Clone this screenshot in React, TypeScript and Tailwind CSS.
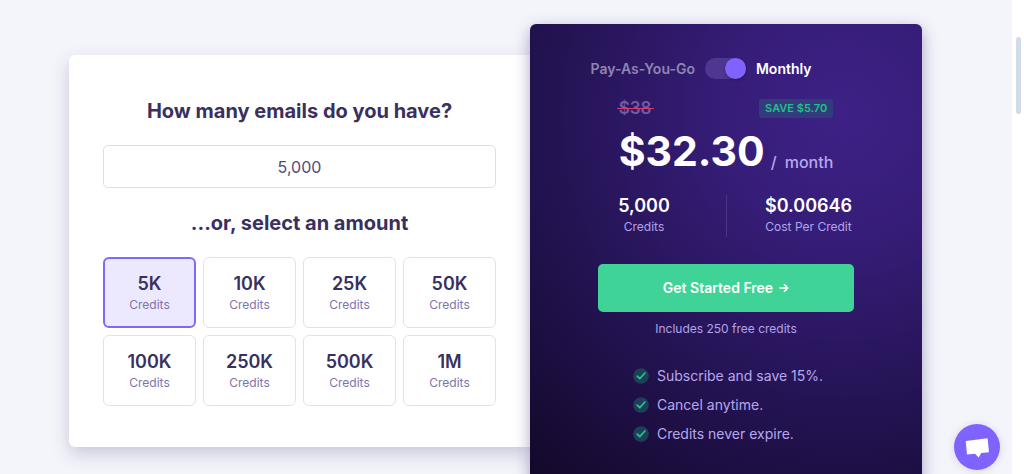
import { useState } from "react";
import clsx from "clsx";

const AMOUNTS = [
  { label: "5K", value: "5,000" },
  { label: "10K", value: "10,000" },
  { label: "25K", value: "25,000" },
  { label: "50K", value: "50,000" },
  { label: "100K", value: "100,000" },
  { label: "250K", value: "250,000" },
  { label: "500K", value: "500,000" },
  { label: "1M", value: "1,000,000" },
];

const PERKS = ["Subscribe and save 15%.", "Cancel anytime.", "Credits never expire."];

const CheckIcon = () => (
  <svg viewBox="0 0 16 16" className="size-4 shrink-0" aria-hidden="true">
    <circle cx="8" cy="8" r="7.8" fill="#1f3f59" />
    <path
      d="M4.2 8.1 6.8 10.6 11.9 5"
      fill="none"
      stroke="#22c68b"
      strokeWidth="1.7"
      strokeLinecap="round"
      strokeLinejoin="round"
    />
  </svg>
);

const ArrowIcon = () => (
  <svg viewBox="0 0 10 10" className="size-[10px]" aria-hidden="true">
    <path
      d="M1 5h7.6M5.4 1.6 8.8 5 5.4 8.4"
      fill="none"
      stroke="currentColor"
      strokeWidth="1.5"
      strokeLinecap="round"
      strokeLinejoin="round"
    />
  </svg>
);

const AmountPicker = () => {
  const [credits, setCredits] = useState("5,000");

  return (
    <section className="mt-[31px] rounded-l-md bg-white px-[34px] pt-[42px] pb-[41px] shadow-[0_7px_18px_rgba(50,35,100,0.22)]">
      <label
        htmlFor="emails"
        className="block text-center text-xl leading-7 font-bold text-[#38305f]"
      >
        How many emails do you have?
      </label>
      <input
        id="emails"
        value={credits}
        onChange={(e) => setCredits(e.target.value)}
        className="mt-5 block h-[43px] w-full rounded-[5px] border border-[#e0dcf0] bg-white text-center text-base text-[#51497a] outline-none"
      />
      <h2 className="mt-[21px] text-center text-xl leading-7 font-bold text-[#38305f]">
        ...or, select an amount
      </h2>
      <div className="mt-5 grid grid-cols-4 gap-[7px]">
        {AMOUNTS.map(({ label, value }) => (
          <button
            key={label}
            type="button"
            onClick={() => setCredits(value)}
            className={clsx(
              "flex h-[71px] flex-col items-center justify-center rounded-md pt-0.5",
              value === credits
                ? "border-2 border-[#8068fb] bg-[#ece9ff]"
                : "border border-[#e3dff3] bg-white",
            )}
          >
            <span className="text-lg leading-[22px] font-semibold text-[#38305f]">{label}</span>
            <span className="text-xs leading-5 text-[#7d74ab]">Credits</span>
          </button>
        ))}
      </div>
    </section>
  );
};

const PlanCard = () => {
  return (
    <section className="flex flex-col items-center rounded-md bg-[radial-gradient(circle_at_80%_20%,#3d2186_0%,#361d78_25%,#20114b_68%,#130828_100%)] pt-[34px] pb-9 shadow-[0_5px_16px_rgba(50,35,100,0.4)]">
      <label className="mr-[50px] flex h-[21px] items-center gap-[10px] text-sm font-semibold">
        <span className="text-[#8f84b3]">Pay-As-You-Go</span>
        <input type="checkbox" role="switch" defaultChecked className="peer sr-only" />
        <span className="flex h-[21px] w-[41px] justify-start rounded-full bg-[#4d3791] peer-checked:justify-end">
          <span className="size-[21px] rounded-full bg-[#8062ff] shadow-[0_1px_3px_rgba(0,0,0,0.3)]" />
        </span>
        <span className="text-white">Monthly</span>
      </label>

      <div className="mt-5">
        <div className="flex h-[19px] items-center justify-between">
          <s className="relative text-[17px] leading-[19px] font-semibold text-[#6f5ca6] no-underline">
            $38
            <span className="absolute -inset-x-0.5 top-[9px] h-px bg-[#d93a6c]" />
          </s>
          <span className="rounded-[3px] bg-[#323b7b] px-[6px] text-[11px] leading-[19px] font-semibold text-[#22c08b]">
            SAVE $5.70
          </span>
        </div>
        <div className="mt-2 flex items-end">
          <span className="text-[41px] leading-[50px] font-bold text-white">$32.30</span>
          <span className="ml-[6px] flex gap-2 text-base leading-7 font-medium text-[#b7a8ee]">
            <span>/</span>
            <span>month</span>
          </span>
        </div>
      </div>

      <dl className="mt-[19px] grid w-full grid-cols-2 px-8 text-center">
        <div className="flex flex-col-reverse">
          <dt className="text-xs leading-5 text-[#b3a4ea]">Credits</dt>
          <dd className="text-lg leading-[22px] font-semibold text-white">5,000</dd>
        </div>
        <div className="flex flex-col-reverse border-l border-[#4a3687]">
          <dt className="text-xs leading-5 text-[#b3a4ea]">Cost Per Credit</dt>
          <dd className="text-lg leading-[22px] font-semibold text-white">$0.00646</dd>
        </div>
      </dl>

      <button
        type="button"
        className="mt-[27px] flex h-12 w-64 items-center justify-center gap-[6px] rounded-[5px] bg-[#3fd398] text-sm font-semibold text-white"
      >
        Get Started Free
        <ArrowIcon />
      </button>
      <p className="mt-[7px] text-xs leading-5 text-[#b3a4ea]">Includes 250 free credits</p>

      <ul className="mt-[22px] pl-1 text-sm text-[#b7a8ee]">
        {PERKS.map((perk) => (
          <li key={perk} className="flex h-[29px] items-center gap-2">
            <CheckIcon />
            {perk}
          </li>
        ))}
      </ul>
    </section>
  );
};

const ChatButton = () => (
  <button
    type="button"
    aria-label="Open chat"
    className="fixed right-6 bottom-1 size-[46px] rounded-full bg-[#8062ff] shadow-[0_1px_8px_rgba(50,35,100,0.15)]"
  >
    <svg viewBox="0 0 46 46" className="size-full" aria-hidden="true">
      <path d="M11.7 17 33.6 14.3 35 28.2 27.2 29 24.7 33.6 21 29.7 13 30.6Z" fill="#fff" />
    </svg>
  </button>
);

const App = () => {
  return (
    <div className="flex h-screen overflow-hidden bg-[#f4f5fb] font-['Inter',sans-serif]">
      <main className="grid flex-1 grid-cols-[461fr_392fr] items-start pt-6 pr-[90px] pl-[69px]">
        <AmountPicker />
        <PlanCard />
      </main>
      <div className="w-3 bg-white pt-[37px] pl-1">
        <div className="h-[77px] w-[5px] rounded-sm bg-[#d1dce6]" />
      </div>
      <ChatButton />
    </div>
  );
};

export default App;
